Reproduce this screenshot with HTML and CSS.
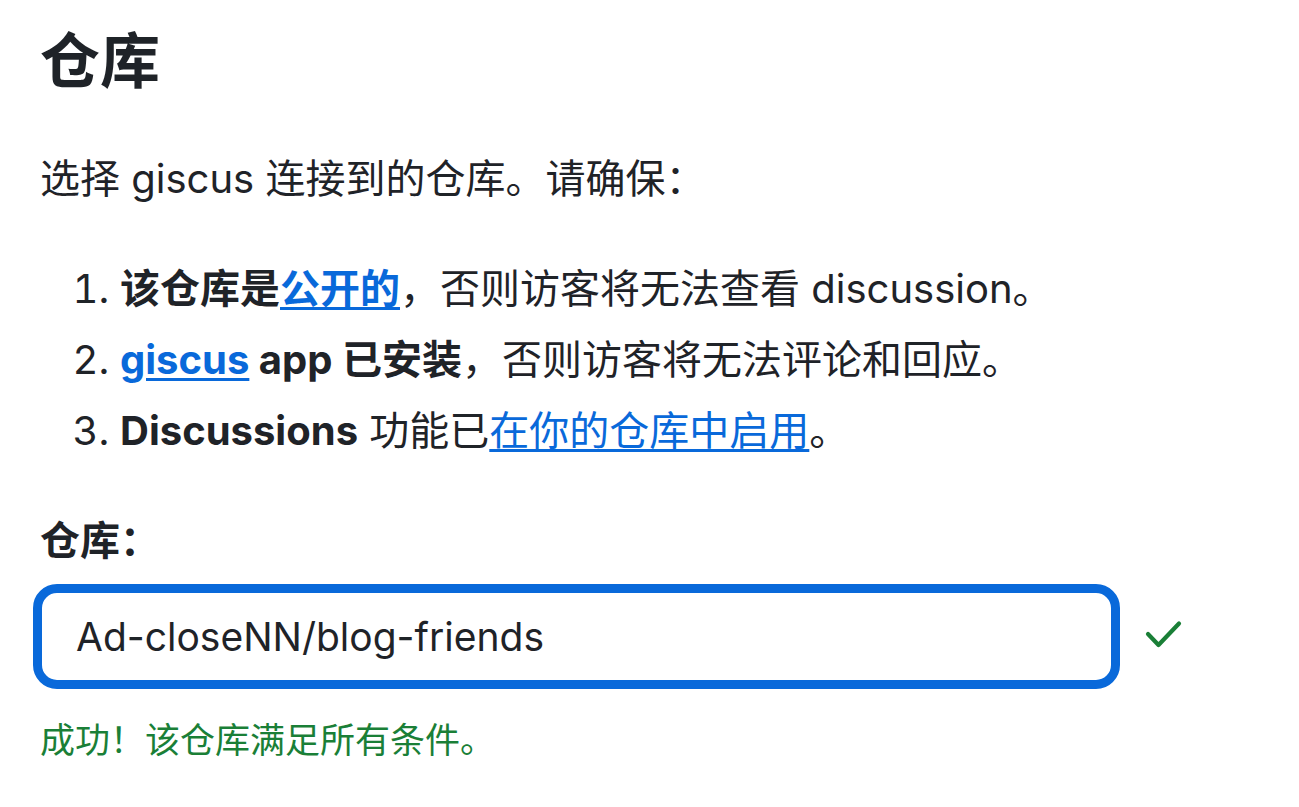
FILE: index.html
```html
<!DOCTYPE html>
<html lang="zh-CN">
<head>
    <meta charset="UTF-8">
    <meta name="viewport" content="width=device-width, initial-scale=1.0">
    <title>giscus 配置 - 仓库</title>
    <link rel="stylesheet" href="styles.css">
</head>
<body>
    <div class="page">
        <h2 class="title">仓库</h2>
        <p class="intro">选择 giscus 连接到的仓库。请确保：</p>

        <!-- 仓库需要满足的条件 -->
        <ol class="rules">
            <li><strong>该仓库是<a href="#">公开的</a></strong>，否则访客将无法查看 discussion。</li>
            <li><strong><a href="#">giscus</a> app 已安装</strong>，否则访客将无法评论和回应。</li>
            <li><strong>Discussions</strong> 功能已<a href="#">在你的仓库中启用</a>。</li>
        </ol>

        <div class="field">
            <label for="repository" class="field-label">仓库：</label>
            <div class="field-row">
                <input type="text" id="repository" class="field-input" value="Ad-closeNN/blog-friends">
                <svg class="field-ok" width="40" height="40" viewBox="0 0 40 40" aria-hidden="true">
                    <polyline points="6,17 16.5,28 37,6.5" fill="none" stroke="#1a7f37" stroke-width="4.2" stroke-linecap="round" stroke-linejoin="round"/>
                </svg>
            </div>
            <p class="field-note">成功！该仓库满足所有条件。</p>
        </div>
    </div>
</body>
</html>
```

FILE: styles.css
```css
body {
    margin: 0;
    background: #ffffff;
    color: #1f2328;
    font-family: Inter, "Noto Sans CJK SC", sans-serif;
    font-size: 40px;
    line-height: 1.5;
}
.page {
    padding: 24px 40px 0 40px;
}
.title {
    margin: 0 0 50px 0;
    font-size: 60px;
    line-height: 1.25;
    font-weight: 700;
}
.intro {
    margin: 0 0 50px 0;
}
a {
    color: #0969da;
    text-decoration: underline;
    text-underline-offset: 4px;
    text-decoration-thickness: 3px;
}
.rules {
    margin: 0 0 50px 0;
    padding-left: 80px;
}
.rules li + li {
    margin-top: 11px;
}
.field-label {
    display: block;
    font-weight: 700;
    margin-bottom: 13px;
}
.field-row {
    display: flex;
    align-items: center;
    gap: 22px;
}
/* the focus ring sits outside the content edge */
.field-input {
    box-sizing: border-box;
    width: 1087px;
    height: 105px;
    margin-left: -7px;
    padding: 0 34px;
    border: 9px solid #0969da;
    border-radius: 24px;
    outline: none;
    font-family: Inter, "Noto Sans CJK SC", sans-serif;
    font-size: 39px;
    color: #1f2328;
    background: #ffffff;
}
.field-ok {
    flex: none;
}
.field-note {
    margin: 25px 0 0 0;
    color: #1a7f37;
    font-size: 35px;
}
```
